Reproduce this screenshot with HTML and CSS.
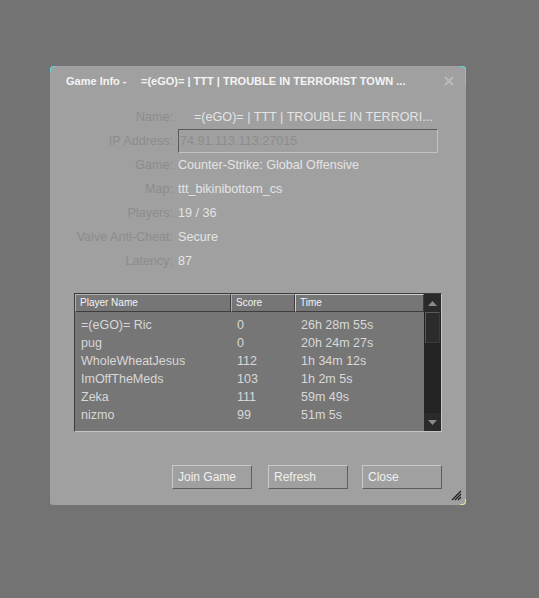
FILE: index.html
```html
<!DOCTYPE html>
<html>
<head>
<meta charset="utf-8">
<link rel="stylesheet" href="styles.css">
</head>
<body>
<div class="dialog">
  <span class="corner tl"></span><span class="corner tr"></span><span class="corner br"></span>
  <div class="titlebar">
    <span class="title-a">Game Info -</span>
    <span class="title-b">=(eGO)= | TTT | TROUBLE IN TERRORIST TOWN ...</span>
    <svg class="xbtn" width="12" height="12" viewBox="0 0 12 12"><path d="M2 2 L10 10 M10 2 L2 10" stroke="#b8b8b8" stroke-width="2.4" fill="none"/></svg>
  </div>
  <div class="info">
    <div class="lbl">Name:</div><div class="val name">=(eGO)= | TTT | TROUBLE IN TERRORI...</div>
    <div class="lbl">IP Address:</div><div class="val"><div class="ipbox">74.91.113.113:27015</div></div>
    <div class="lbl">Game:</div><div class="val">Counter-Strike: Global Offensive</div>
    <div class="lbl">Map:</div><div class="val">ttt_bikinibottom_cs</div>
    <div class="lbl">Players:</div><div class="val">19 / 36</div>
    <div class="lbl">Valve Anti-Cheat:</div><div class="val">Secure</div>
    <div class="lbl">Latency:</div><div class="val">87</div>
  </div>
  <div class="table">
    <div class="tmain">
      <div class="thead">
        <div class="th c1">Player Name</div>
        <div class="th c2">Score</div>
        <div class="th c3 active">Time</div>
      </div>
      <div class="tbody">
        <div class="tr"><div class="c1">=(eGO)= Ric</div><div class="c2">0</div><div class="c3">26h 28m 55s</div></div>
        <div class="tr"><div class="c1">pug</div><div class="c2">0</div><div class="c3">20h 24m 27s</div></div>
        <div class="tr"><div class="c1">WholeWheatJesus</div><div class="c2">112</div><div class="c3">1h 34m 12s</div></div>
        <div class="tr"><div class="c1">ImOffTheMeds</div><div class="c2">103</div><div class="c3">1h 2m 5s</div></div>
        <div class="tr"><div class="c1">Zeka</div><div class="c2">111</div><div class="c3">59m 49s</div></div>
        <div class="tr"><div class="c1">nizmo</div><div class="c2">99</div><div class="c3">51m 5s</div></div>
      </div>
    </div>
    <div class="scroll">
      <div class="sbtn"><svg width="9" height="5" viewBox="0 0 9 5"><path d="M0 5 L4.5 0 L9 5 Z" fill="#8a8a8a"/></svg></div>
      <div class="thumb"></div>
      <div class="track"></div>
      <div class="sbtn"><svg width="9" height="5" viewBox="0 0 9 5"><path d="M0 0 L4.5 5 L9 0 Z" fill="#8a8a8a"/></svg></div>
    </div>
  </div>
  <div class="buttons">
    <div class="btn">Join Game</div>
    <div class="btn b2">Refresh</div>
    <div class="btn b3">Close</div>
  </div>
  <svg class="grip" width="12" height="12" viewBox="0 0 12 12">
    <path d="M11 2 L2 11 M11 5 L5 11 M11 8 L8 11" stroke="#1e1e1e" stroke-width="1.2" fill="none"/>
  </svg>
</div>
</body>
</html>
```
FILE: styles.css
```css
html, body { margin: 0; padding: 0; }
body {
  background: #737373;
  width: 539px;
  height: 598px;
  overflow: hidden;
  font-family: "Liberation Sans", Arial, sans-serif;
}
.dialog {
  position: relative;
  margin: 66px 0 0 50px;
  width: 416px;
  height: 439px;
  background: #a0a0a0;
  border-radius: 3px;
  box-sizing: border-box;
}
.corner { position: absolute; width: 5px; height: 5px; }
.corner.tl { left: 0; top: 0; border-top: 1px solid #5fd0d8; border-left: 1px solid #5fd0d8; border-top-left-radius: 4px; }
.corner.tr { right: 0; top: 0; border-top: 1px solid #5fd0d8; border-right: 1px solid #5fd0d8; border-top-right-radius: 4px; }
.corner.br { right: 0; bottom: 0; border-bottom: 1px solid #e8e0a0; border-right: 1px solid #e8e0a0; border-bottom-right-radius: 4px; }
.titlebar {
  display: flex;
  align-items: center;
  height: 30px;
  padding: 0 0 0 16px;
  color: #f4f4f4;
  font-weight: bold;
  font-size: 11px;
}
.title-a { width: 75px; }
.title-b { flex: 1; }
.xbtn { margin-right: 11px; }
.info {
  display: grid;
  grid-template-columns: 123px 260px;
  column-gap: 5px;
  grid-auto-rows: 24px;
  margin-top: 9px;
  font-size: 12.6px;
}
.lbl { text-align: right; color: #8c8c8c; line-height: 24px; }
.val { color: #e4e4e4; line-height: 24px; white-space: nowrap; }
.val.name { padding-left: 16px; }
.ipbox {
  height: 24px;
  box-sizing: border-box;
  border: 1px solid #c2c2c2;
  border-top-color: #5a5a5a;
  border-left-color: #5a5a5a;
  color: #8c8c8c;
  line-height: 22px;
  padding-left: 1px;
}
.table {
  display: flex;
  margin: 20px 0 0 24px;
  width: 368px;
  height: 139px;
  box-sizing: border-box;
  border: 1px solid #c4c4c4;
  border-top-color: #3c3c3c;
  border-left-color: #3c3c3c;
  background: #767676;
}
.tmain { flex: 1; display: flex; flex-direction: column; }
.thead { display: flex; height: 18px; }
.th {
  box-sizing: border-box;
  height: 18px;
  border: 1px solid #3e3e3e;
  border-top-color: #b0b0b0;
  border-left-color: #b0b0b0;
  color: #f4f4f4;
  font-size: 10px;
  line-height: 16px;
  padding-left: 4px;
  background: #767676;
}
.th.active { border-top-color: #d0d0d0; border-left-color: #d0d0d0; }
.thead .c1 { width: 156px; }
.thead .c2 { width: 64px; }
.thead .c3 { width: 129px; }
.tbody { padding-top: 4px; }
.tr { display: flex; height: 18px; line-height: 18px; font-size: 12.5px; color: #d8d8d8; }
.tr div { padding-left: 6px; box-sizing: border-box; white-space: nowrap; }
.tr .c1 { width: 156px; }
.tr .c2 { width: 64px; }
.tr .c3 { width: 129px; }
.scroll {
  width: 17px;
  display: flex;
  flex-direction: column;
  background: #232323;
}
.sbtn {
  height: 18px;
  display: flex;
  align-items: center;
  justify-content: center;
  background: #2a2a2a;
}
.thumb {
  height: 31px;
  box-sizing: border-box;
  border: 1px solid #5a5a5a;
  border-right-color: #3a3a3a;
  border-bottom-color: #3a3a3a;
  background: #2c2c2c;
  margin: 0 1px;
}
.track { flex: 1; }
.buttons {
  display: flex;
  margin: 33px 0 0 122px;
}
.btn {
  width: 80px;
  height: 24px;
  box-sizing: border-box;
  border: 1px solid #5e5e5e;
  border-top-color: #c8c8c8;
  border-left-color: #c8c8c8;
  color: #f0f0f0;
  font-size: 12px;
  line-height: 22px;
  padding-left: 5px;
}
.b2 { margin-left: 16px; }
.b3 { margin-left: 14px; }
.grip { position: absolute; right: 4px; bottom: 4px; }
```
